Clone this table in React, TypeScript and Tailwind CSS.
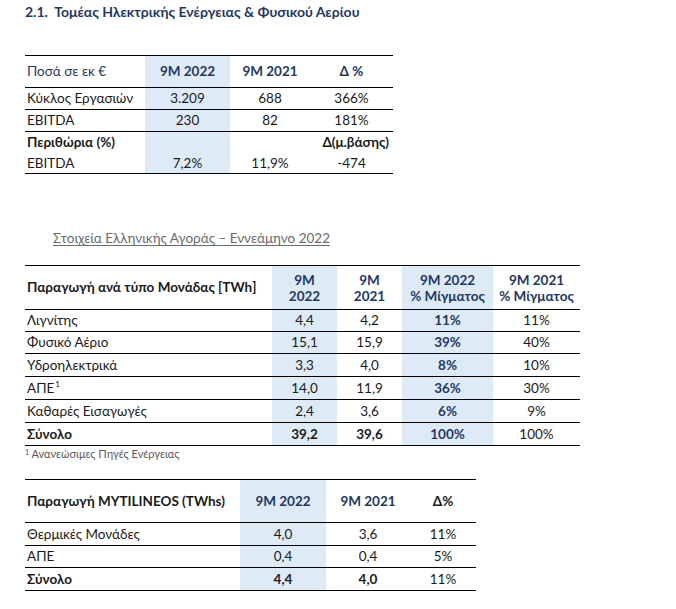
import React from "react";

const HL = "bg-[#deeaf6]";
const BLUE = "text-[#1f3864]";

const t1Cols = "grid grid-cols-[120px_85px_80px_83px]";
const t2Cols = "grid grid-cols-[247px_65px_65px_91px_87px]";
const t3Cols = "grid grid-cols-[215px_86px_84px_66px]";

const marketRows = [
  { label: "Λιγνίτης", a: "4,4", b: "4,2", c: "11%", d: "11%", h: "h-[22px]" },
  { label: "Φυσικό Αέριο", a: "15,1", b: "15,9", c: "39%", d: "40%", h: "h-[22px]" },
  { label: "Υδροηλεκτρικά", a: "3,3", b: "4,0", c: "8%", d: "10%", h: "h-[23px]" },
  { label: "ΑΠΕ", sup: true, a: "14,0", b: "11,9", c: "36%", d: "30%", h: "h-[23px]" },
  { label: "Καθαρές Εισαγωγές", a: "2,4", b: "3,6", c: "6%", d: "9%", h: "h-[23px]" },
];

export default function App() {
  return (
    <div className="min-h-[609px] w-[676px] bg-white pl-[25px] pt-[3px] font-['Lato','Open_Sans',sans-serif] text-[13.5px] text-[#1a1a1a]">
      <h1 className={`text-[14px] font-bold leading-[18px] ${BLUE}`}>
        2.1.&nbsp;&nbsp;Τομέας Ηλεκτρικής Ενέργειας &amp; Φυσικού Αερίου
      </h1>

      {/* financials */}
      <div className="mt-[34px] w-[368px] border-t border-black">
        <div className={`${t1Cols} h-[32px] border-b border-black`}>
          <div className={`flex items-center pl-[2px] ${BLUE}`}>Ποσά σε εκ €</div>
          <div className={`flex items-center justify-center font-bold ${HL} ${BLUE}`}>9M 2022</div>
          <div className={`flex items-center justify-center font-bold ${BLUE}`}>9M 2021</div>
          <div className={`flex items-center justify-center font-bold ${BLUE}`}>Δ %</div>
        </div>
        <div className={`${t1Cols} h-[22px] border-b border-black`}>
          <div className="flex items-center pl-[2px]">Κύκλος Εργασιών</div>
          <div className={`flex items-center justify-center ${HL}`}>3.209</div>
          <div className="flex items-center justify-center">688</div>
          <div className="flex items-center justify-center">366%</div>
        </div>
        <div className={`${t1Cols} h-[22px] border-b border-black`}>
          <div className="flex items-center pl-[2px]">EBITDA</div>
          <div className={`flex items-center justify-center ${HL}`}>230</div>
          <div className="flex items-center justify-center">82</div>
          <div className="flex items-center justify-center">181%</div>
        </div>
        <div className={`${t1Cols} h-[21px]`}>
          <div className="flex items-center pl-[2px] font-bold">Περιθώρια (%)</div>
          <div className={HL}></div>
          <div></div>
          <div className="flex items-center justify-end pr-[4px] font-bold">Δ(μ.βάσης)</div>
        </div>
        <div className={`${t1Cols} h-[21px] border-b border-black`}>
          <div className="flex items-center pl-[2px]">EBITDA</div>
          <div className={`flex items-center justify-center ${HL}`}>7,2%</div>
          <div className="flex items-center justify-center">11,9%</div>
          <div className="flex items-center justify-center">-474</div>
        </div>
      </div>

      <p className="mt-[56px] ml-[28px] text-[13.5px] leading-[16px] text-[#6b6b6b] underline underline-offset-2">
        Στοιχεία Ελληνικής Αγοράς – Εννεάμηνο 2022
      </p>

      {/* greek market */}
      <div className="mt-[19px] w-[555px] border-t border-black">
        <div className={`${t2Cols} h-[44px] border-b border-black font-bold`}>
          <div className="flex items-center pl-[2px]">Παραγωγή ανά τύπο Μονάδας [TWh]</div>
          <div className={`flex flex-col items-center justify-center leading-[16px] ${HL} ${BLUE}`}>
            <span>9M</span>
            <span>2022</span>
          </div>
          <div className={`flex flex-col items-center justify-center leading-[16px] ${BLUE}`}>
            <span>9M</span>
            <span>2021</span>
          </div>
          <div className={`flex flex-col items-center justify-center leading-[16px] ${HL} ${BLUE}`}>
            <span>9M 2022</span>
            <span>% Μίγματος</span>
          </div>
          <div className={`flex flex-col items-center justify-center leading-[16px] ${BLUE}`}>
            <span>9M 2021</span>
            <span>% Μίγματος</span>
          </div>
        </div>
        {marketRows.map((r) => (
          <div key={r.label} className={`${t2Cols} ${r.h} border-b border-black`}>
            <div className="flex items-center pl-[2px]">
              {r.label}
              {r.sup && <sup className="ml-[1px] text-[8px]">1</sup>}
            </div>
            <div className={`flex items-center justify-center ${HL}`}>{r.a}</div>
            <div className="flex items-center justify-center">{r.b}</div>
            <div className={`flex items-center justify-center font-bold ${HL} ${BLUE}`}>{r.c}</div>
            <div className="flex items-center justify-center">{r.d}</div>
          </div>
        ))}
        <div className={`${t2Cols} h-[23px] border-b border-black font-bold`}>
          <div className="flex items-center pl-[2px]">Σύνολο</div>
          <div className={`flex items-center justify-center ${HL}`}>39,2</div>
          <div className="flex items-center justify-center">39,6</div>
          <div className={`flex items-center justify-center ${HL} ${BLUE}`}>100%</div>
          <div className="flex items-center justify-center font-normal">100%</div>
        </div>
      </div>
      <p className="mt-[1px] text-[11px] leading-[14px] text-[#595959]">
        <sup className="text-[7px]">1</sup> Ανανεώσιμες Πηγές Ενέργειας
      </p>

      {/* mytilineos */}
      <div className="mt-[18px] w-[451px] border-t border-black">
        <div className={`${t3Cols} h-[43px] border-b border-black font-bold`}>
          <div className="flex items-center pl-[2px]">Παραγωγή MYTILINEOS (TWhs)</div>
          <div className={`flex items-center justify-center ${HL} ${BLUE}`}>9M 2022</div>
          <div className={`flex items-center justify-center ${BLUE}`}>9M 2021</div>
          <div className="flex items-center justify-center">Δ%</div>
        </div>
        <div className={`${t3Cols} h-[23px] border-b border-black`}>
          <div className="flex items-center pl-[2px]">Θερμικές Μονάδες</div>
          <div className={`flex items-center justify-center ${HL}`}>4,0</div>
          <div className="flex items-center justify-center">3,6</div>
          <div className="flex items-center justify-center">11%</div>
        </div>
        <div className={`${t3Cols} h-[22px] border-b border-black`}>
          <div className="flex items-center pl-[2px]">ΑΠΕ</div>
          <div className={`flex items-center justify-center ${HL}`}>0,4</div>
          <div className="flex items-center justify-center">0,4</div>
          <div className="flex items-center justify-center">5%</div>
        </div>
        <div className={`${t3Cols} h-[23px] border-b border-black`}>
          <div className="flex items-center pl-[2px] font-bold">Σύνολο</div>
          <div className={`flex items-center justify-center font-bold ${HL}`}>4,4</div>
          <div className="flex items-center justify-center font-bold">4,0</div>
          <div className="flex items-center justify-center">11%</div>
        </div>
      </div>
    </div>
  );
}
